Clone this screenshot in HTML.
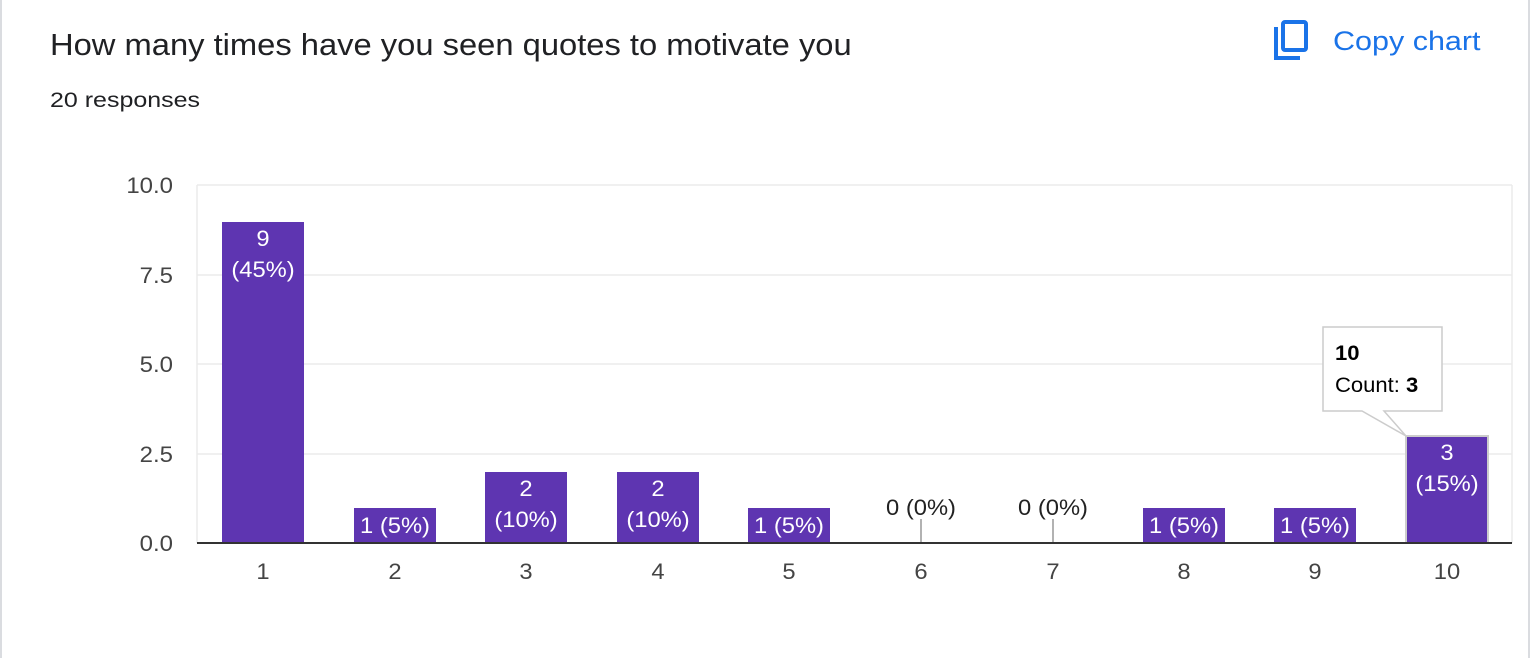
<!DOCTYPE html>
<html><head><meta charset="utf-8"><style>
body{margin:0;width:1530px;height:658px;background:#fff;overflow:hidden;font-family:"Liberation Sans",Arial,sans-serif;}
.edge{position:absolute;left:0;top:0;width:2px;height:658px;background:#dadce0}
.edge2{position:absolute;right:0;top:0;width:2px;height:658px;background:#dadce0}
.s{position:absolute;white-space:nowrap;transform-origin:0 0;line-height:1;}
.t{left:50px;top:29px;font-size:31px;color:#202124;transform:scaleX(1.055)}
.r{left:50px;top:90px;font-size:21px;color:#202124;transform:scaleX(1.19)}
.c{left:1333px;top:28px;font-size:27px;color:#1a73e8;transform:scaleX(1.13)}
</style></head><body>
<div class="edge"></div><div class="edge2"></div>
<div class="s t">How many times have you seen quotes to motivate you</div>
<div class="s r">20 responses</div>
<svg style="position:absolute;left:1272px;top:19px" width="40" height="42" viewBox="0 0 40 42">
<path d="M4 8 V39 H28" fill="none" stroke="#1a73e8" stroke-width="4"/>
<rect x="11" y="3" width="23" height="28" rx="2" fill="none" stroke="#1a73e8" stroke-width="4"/>
</svg>
<div class="s c">Copy chart</div>
<svg style="position:absolute;left:0;top:0" width="1530" height="658" font-family="Liberation Sans, Arial, sans-serif">
<g stroke="#ebebeb" stroke-width="1.5">
<line x1="197" y1="185" x2="1512" y2="185"/><line x1="197" y1="275" x2="1512" y2="275"/>
<line x1="197" y1="364" x2="1512" y2="364"/><line x1="197" y1="454" x2="1512" y2="454"/>
<line x1="1512" y1="185" x2="1512" y2="543"/><line x1="197" y1="185" x2="197" y2="543"/>
</g>
<g font-size="22" fill="#444" text-anchor="end">
<text transform="translate(173,193) scale(1.09,1)">10.0</text><text transform="translate(173,283) scale(1.09,1)">7.5</text><text transform="translate(173,372) scale(1.09,1)">5.0</text><text transform="translate(173,462) scale(1.09,1)">2.5</text><text transform="translate(173,551) scale(1.09,1)">0.0</text>
</g>
<g fill="#5e35b1">
<rect x="222" y="222" width="82" height="321"/>
<rect x="354" y="508" width="82" height="35"/>
<rect x="485" y="472" width="82" height="71"/>
<rect x="617" y="472" width="82" height="71"/>
<rect x="748" y="508" width="82" height="35"/>
<rect x="1143" y="508" width="82" height="35"/>
<rect x="1274" y="508" width="82" height="35"/>
<rect x="1406" y="436" width="82" height="107" stroke="#ccc" stroke-width="2"/>
</g>
<g stroke="#999" stroke-width="1.5"><line x1="921" y1="519" x2="921" y2="543"/><line x1="1053" y1="519" x2="1053" y2="543"/></g>
<g font-size="22" fill="#fff" text-anchor="middle">
<text transform="translate(263,246) scale(1.08,1)">9</text><text transform="translate(263,277) scale(1.08,1)">(45%)</text>
<text transform="translate(395,533) scale(1.08,1)">1 (5%)</text>
<text transform="translate(526,496) scale(1.08,1)">2</text><text transform="translate(526,527) scale(1.08,1)">(10%)</text>
<text transform="translate(658,496) scale(1.08,1)">2</text><text transform="translate(658,527) scale(1.08,1)">(10%)</text>
<text transform="translate(789,533) scale(1.08,1)">1 (5%)</text>
<text transform="translate(1184,533) scale(1.08,1)">1 (5%)</text>
<text transform="translate(1315,533) scale(1.08,1)">1 (5%)</text>
<text transform="translate(1447,460) scale(1.08,1)">3</text><text transform="translate(1447,491) scale(1.08,1)">(15%)</text>
</g>
<g font-size="22" fill="#222" text-anchor="middle">
<text transform="translate(921,515) scale(1.08,1)">0 (0%)</text><text transform="translate(1053,515) scale(1.08,1)">0 (0%)</text>
</g>
<line x1="197" y1="543" x2="1512" y2="543" stroke="#333" stroke-width="2"/>
<g font-size="22" fill="#444" text-anchor="middle">
<text transform="translate(263,579) scale(1.08,1)">1</text><text transform="translate(395,579) scale(1.08,1)">2</text><text transform="translate(526,579) scale(1.08,1)">3</text><text transform="translate(658,579) scale(1.08,1)">4</text><text transform="translate(789,579) scale(1.08,1)">5</text><text transform="translate(921,579) scale(1.08,1)">6</text><text transform="translate(1053,579) scale(1.08,1)">7</text><text transform="translate(1184,579) scale(1.08,1)">8</text><text transform="translate(1315,579) scale(1.08,1)">9</text><text transform="translate(1447,579) scale(1.08,1)">10</text>
</g>
<path d="M1323 327 H1442 V411 H1384 L1406 436 L1362 411 H1323 Z" fill="#fff" stroke="#ccc" stroke-width="1.5"/>
<text transform="translate(1335,360) scale(1.05,1)" font-size="21" font-weight="bold" fill="#000">10</text>
<text transform="translate(1335,392) scale(1.05,1)" font-size="21" fill="#000">Count: <tspan font-weight="bold">3</tspan></text>
</svg>
</body></html>
